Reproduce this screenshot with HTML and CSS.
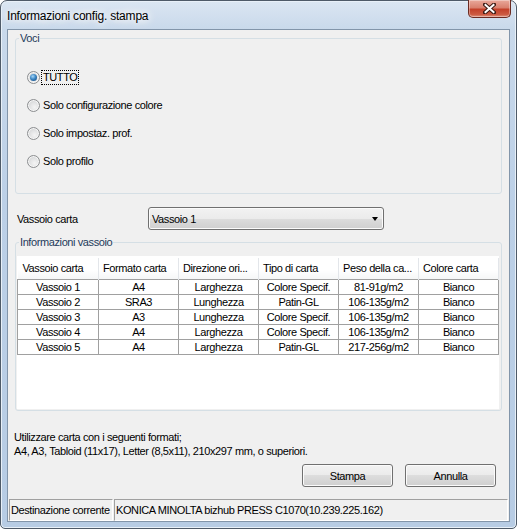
FILE: index.html
```html
<!DOCTYPE html>
<html lang="it">
<head>
<meta charset="utf-8">
<title>Informazioni config. stampa</title>
<link rel="stylesheet" href="styles.css">
</head>
<body>
<div class="window">
  <div class="titlebar">
    <span class="title">Informazioni config. stampa</span>
    <div class="close">
      <svg width="13" height="11" viewBox="0 0 13 11">
        <path d="M2 1.5 L11 9.5 M11 1.5 L2 9.5" stroke="#3b1a14" stroke-width="4" stroke-linecap="square" fill="none"/>
        <path d="M2.5 2 L10.5 9 M10.5 2 L2.5 9" stroke="#ffffff" stroke-width="2" stroke-linecap="square" fill="none"/>
      </svg>
    </div>
  </div>
  <div class="client">
    <fieldset class="group voci">
      <legend>Voci</legend>
      <div class="radio-row"><span class="radio checked"></span><span class="rlabel focus">TUTTO</span></div>
      <div class="radio-row"><span class="radio"></span><span class="rlabel">Solo configurazione colore</span></div>
      <div class="radio-row"><span class="radio"></span><span class="rlabel">Solo impostaz. prof.</span></div>
      <div class="radio-row"><span class="radio"></span><span class="rlabel">Solo profilo</span></div>
    </fieldset>
    <div class="tray-row">
      <span class="tray-label">Vassoio carta</span>
      <div class="combo"><span>Vassoio 1</span><span class="arrow"></span></div>
    </div>
    <fieldset class="group info">
      <legend>Informazioni vassoio</legend>
      <div class="listview">
        <table class="grid">
          <thead>
            <tr><th>Vassoio carta</th><th>Formato carta</th><th>Direzione ori...</th><th>Tipo di carta</th><th>Peso della ca...</th><th>Colore carta</th></tr>
          </thead>
          <tbody>
            <tr><td>Vassoio 1</td><td>A4</td><td>Larghezza</td><td>Colore Specif.</td><td>81-91g/m2</td><td>Bianco</td></tr>
            <tr><td>Vassoio 2</td><td>SRA3</td><td>Lunghezza</td><td>Patin-GL</td><td>106-135g/m2</td><td>Bianco</td></tr>
            <tr><td>Vassoio 3</td><td>A3</td><td>Lunghezza</td><td>Colore Specif.</td><td>106-135g/m2</td><td>Bianco</td></tr>
            <tr><td>Vassoio 4</td><td>A4</td><td>Larghezza</td><td>Colore Specif.</td><td>106-135g/m2</td><td>Bianco</td></tr>
            <tr><td>Vassoio 5</td><td>A4</td><td>Larghezza</td><td>Patin-GL</td><td>217-256g/m2</td><td>Bianco</td></tr>
          </tbody>
        </table>
      </div>
    </fieldset>
    <div class="note">
      <p>Utilizzare carta con i seguenti formati;</p>
      <p>A4, A3, Tabloid (11x17), Letter (8,5x11), 210x297 mm, o superiori.</p>
    </div>
    <div class="buttons">
      <button class="btn">Stampa</button>
      <button class="btn">Annulla</button>
    </div>
    <div class="statusbar">
      <div class="panel p1">Destinazione corrente</div>
      <div class="panel p2">KONICA MINOLTA bizhub PRESS C1070(10.239.225.162)</div>
    </div>
  </div>
</div>
</body>
</html>
```
FILE: styles.css
```css
html, body {
  margin: 0;
  padding: 0;
  background: #ffffff;
}
body {
  width: 517px;
  height: 529px;
  overflow: hidden;
  font-family: "Liberation Sans", Arial, sans-serif;
  font-size: 11px;
  letter-spacing: -0.4px;
  color: #000;
}
.window {
  box-sizing: border-box;
  width: 517px;
  height: 529px;
  border: 1px solid #4e5a68;
  border-radius: 7px 7px 5px 5px;
  background: linear-gradient(to bottom, #dbe6f2 0px, #c9d9eb 28px, #bcd0e7 200px, #b7cce4 100%);
  padding: 0 6px 6px 6px;
  display: flex;
  flex-direction: column;
  box-shadow: inset 0 0 0 1px #e8f0f8;
}
.titlebar {
  height: 28px;
  flex: none;
  display: flex;
  align-items: center;
}
.title {
  font-size: 12px;
  letter-spacing: -0.2px;
  color: #000;
  text-shadow: 0 0 6px #fff, 0 0 10px #fff, 0 0 14px #fff;
  padding-top: 1px;
}
.close {
  margin-left: auto;
  margin-right: -1px;
  margin-top: -1px;
  align-self: flex-start;
  width: 43px;
  height: 18px;
  box-sizing: border-box;
  border: 1px solid #6b2b22;
  border-top: none;
  border-radius: 0 0 5px 5px;
  background: linear-gradient(to bottom, #e9a99b 0%, #d9806e 45%, #c4412a 55%, #cc5a41 85%, #e09480 100%);
  box-shadow: inset 0 0 0 1px rgba(255,255,255,0.35);
  display: flex;
  align-items: center;
  justify-content: center;
}
.close svg { display: block; }
.client {
  flex: 1;
  background: #f0f0f0;
  border: 1px solid #8295aa;
  display: flex;
  flex-direction: column;
}
.group {
  border: 1px solid #d5dfe5;
  border-radius: 3px;
  margin: 0 7px 0 7px;
  padding: 0 1px;
  min-width: 0;
}
.group legend {
  padding: 0 1px;
  margin-left: 2px;
  line-height: 13px;
  color: #1e3a5a;
}
.voci {
  margin-top: 2px;
  padding-top: 18px;
  padding-bottom: 18px;
}
.radio-row {
  height: 28px;
  display: flex;
  align-items: center;
  padding-left: 10px;
}
.radio {
  box-sizing: border-box;
  width: 13px;
  height: 13px;
  border-radius: 50%;
  border: 1px solid #8c8e90;
  background: radial-gradient(circle at 60% 65%, #f4f4f4 0%, #e2e3e4 45%, #c9cacb 100%);
  box-shadow: inset 0 0 0 1px #f6f6f6;
  position: relative;
  flex: none;
}
.radio.checked::after {
  content: "";
  position: absolute;
  left: 2px;
  top: 2px;
  width: 7px;
  height: 7px;
  border-radius: 50%;
  background: radial-gradient(circle at 40% 35%, #a6d7f7 0%, #3c86c4 45%, #0c3f74 100%);
}
.rlabel {
  margin-left: 3px;
  line-height: 13px;
}
.rlabel.focus {
  outline: 1px dotted #000;
  outline-offset: 0;
  padding: 0 1px;
  margin-left: 2px;
}
.tray-row {
  margin-top: 13px;
  height: 23px;
  display: flex;
  align-items: center;
}
.tray-label {
  width: 131px;
  padding-left: 9px;
  flex: none;
}
.combo {
  box-sizing: border-box;
  width: 236px;
  height: 23px;
  border: 1px solid #707070;
  border-radius: 3px;
  background: linear-gradient(to bottom, #f2f2f2 0%, #ebebeb 50%, #dddddd 50%, #cfcfcf 100%);
  box-shadow: inset 0 0 0 1px #fbfbfb;
  display: flex;
  align-items: center;
  padding-left: 3px;
  padding-right: 5px;
}
.arrow {
  margin-left: auto;
  width: 0;
  height: 0;
  border-left: 3.5px solid transparent;
  border-right: 3.5px solid transparent;
  border-top: 4px solid #000;
}
.info {
  margin-top: 6px;
  padding-top: 7px;
  padding-bottom: 1px;
}
.listview {
  box-sizing: border-box;
  height: 153px;
  width: 482px;
  background: #fff;
  padding-top: 2px;
}
.grid {
  border-collapse: collapse;
  table-layout: fixed;
  width: 481px;
}
.grid th {
  width: 80px;
  height: 21px;
  padding: 0 0 0 4px;
  box-sizing: border-box;
  font-weight: normal;
  text-align: left;
  white-space: nowrap;
  overflow: hidden;
  border: none;
  border-right: 1px solid #e3e6ea;
  background: linear-gradient(to bottom, #ffffff 0%, #ffffff 55%, #f5f6f7 100%);
}
.grid th:first-child { width: 81px; padding-left: 5px; }
.grid td {
  height: 14px;
  padding: 0;
  line-height: 14px;
  text-align: center;
  white-space: nowrap;
  border: 1px solid #a0a0a0;
}
.note {
  margin-top: 19px;
  padding-left: 6px;
}
.note p {
  margin: 0;
  line-height: 14px;
}
.buttons {
  margin-top: 6px;
  display: flex;
  justify-content: flex-end;
  gap: 12px;
  padding-right: 13px;
}
.btn {
  box-sizing: border-box;
  width: 91px;
  height: 23px;
  border: 1px solid #707070;
  border-radius: 3px;
  background: linear-gradient(to bottom, #f2f2f2 0%, #ebebeb 50%, #dddddd 50%, #cfcfcf 100%);
  box-shadow: inset 0 0 0 1px #fbfbfb;
  font-family: inherit;
  font-size: 11px;
  letter-spacing: -0.4px;
  color: #000;
  padding: 0;
}
.statusbar {
  margin-top: auto;
  height: 22px;
  display: flex;
  padding: 0 1px 0 1px;
  gap: 1px;
}
.panel {
  box-sizing: border-box;
  height: 22px;
  border-top: 1px solid #a0a0a0;
  border-left: 1px solid #a0a0a0;
  border-bottom: 1px solid #ffffff;
  border-right: 1px solid #ffffff;
  padding-left: 1px;
  display: flex;
  align-items: center;
  white-space: nowrap;
}
.p1 { width: 104px; }
.p2 { flex: 1; margin-right: 0; }
```
